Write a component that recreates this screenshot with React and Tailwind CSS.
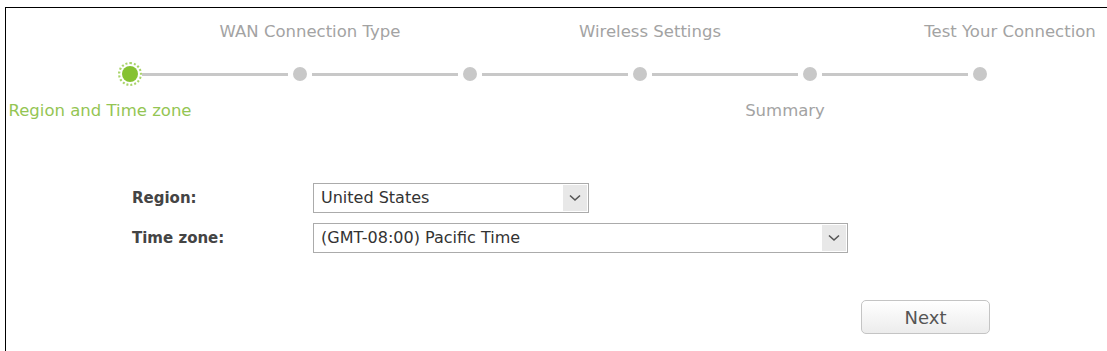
const font = { fontFamily: '"DejaVu Sans", Verdana, sans-serif' }

function Dot({ active }) {
  return (
    <div className="w-[24px] h-[24px] flex items-center justify-center shrink-0">
      {active ? (
        <div className="w-[24px] h-[24px] rounded-full border-2 border-dotted border-[#a8d468] flex items-center justify-center">
          <div className="w-[16px] h-[16px] rounded-full bg-[#86c232]" />
        </div>
      ) : (
        <div className="w-[14px] h-[14px] rounded-full bg-[#c8c8c8]" />
      )}
    </div>
  )
}

function Chevron() {
  return (
    <svg width="12" height="8" viewBox="0 0 12 8" fill="none">
      <path d="M1 1.5 L6 6 L11 1.5" stroke="#555" strokeWidth="1.6" />
    </svg>
  )
}

function Select({ value, width }) {
  return (
    <div className={`${width} h-[30px] border border-[#ababab] bg-white flex items-stretch`}>
      <span className="flex-1 flex items-center pl-[7px] text-[16px] text-[#333]">{value}</span>
      <span className="w-[24px] my-[1px] mr-[1px] bg-[#e8e8e8] flex items-center justify-center">
        <Chevron />
      </span>
    </div>
  )
}

export default function App() {
  const steps = [true, false, false, false, false, false]

  return (
    <div className="w-[1107px] h-[351px] bg-white overflow-hidden pt-[7px] pl-[5px]" style={font}>
      <div className="h-[344px] border-t border-l border-black">
        {/* etapes du haut */}
        <div className="flex h-[48px] items-center whitespace-nowrap text-[16.5px] text-[#a3a3a3]">
          <div className="w-[134px] shrink-0" />
          <div className="w-[340px] shrink-0 text-center">WAN Connection Type</div>
          <div className="w-[340px] shrink-0 text-center">Wireless Settings</div>
          <div className="w-[380px] shrink-0 text-center">Test Your Connection</div>
        </div>

        {/* ligne de progression */}
        <div className="flex items-center h-[36px] pl-[112px]">
          {steps.map((active, i) => (
            <div key={i} className="flex items-center">
              <Dot active={active} />
              {i < steps.length - 1 && <div className="w-[146px] h-[3px] bg-[#c8c8c8]" />}
            </div>
          ))}
        </div>

        {/* etapes du bas */}
        <div className="flex h-[38px] items-center whitespace-nowrap text-[16.5px] text-[#a3a3a3]">
          <div className="w-[188px] shrink-0 text-center text-[#94c553]">Region and Time zone</div>
          <div className="w-[541px] shrink-0" />
          <div className="w-[100px] shrink-0 text-center">Summary</div>
        </div>

        {/* formulaire */}
        <div className="pt-[53px] pl-[126px] flex flex-col gap-[10px]">
          <div className="flex items-center">
            <label className="w-[181px] text-[15px] font-bold text-[#444]">Region:</label>
            <Select value="United States" width="w-[276px]" />
          </div>
          <div className="flex items-center">
            <label className="w-[181px] text-[15px] font-bold text-[#444]">Time zone:</label>
            <Select value="(GMT-08:00) Pacific Time" width="w-[535px]" />
          </div>
        </div>

        <div className="flex pt-[47px] pl-[855px]">
          <button className="w-[129px] h-[34px] rounded-[5px] border border-[#c4c4c4] bg-gradient-to-b from-white to-[#ececec] text-[18px] text-[#555]">
            Next
          </button>
        </div>
      </div>
    </div>
  )
}
